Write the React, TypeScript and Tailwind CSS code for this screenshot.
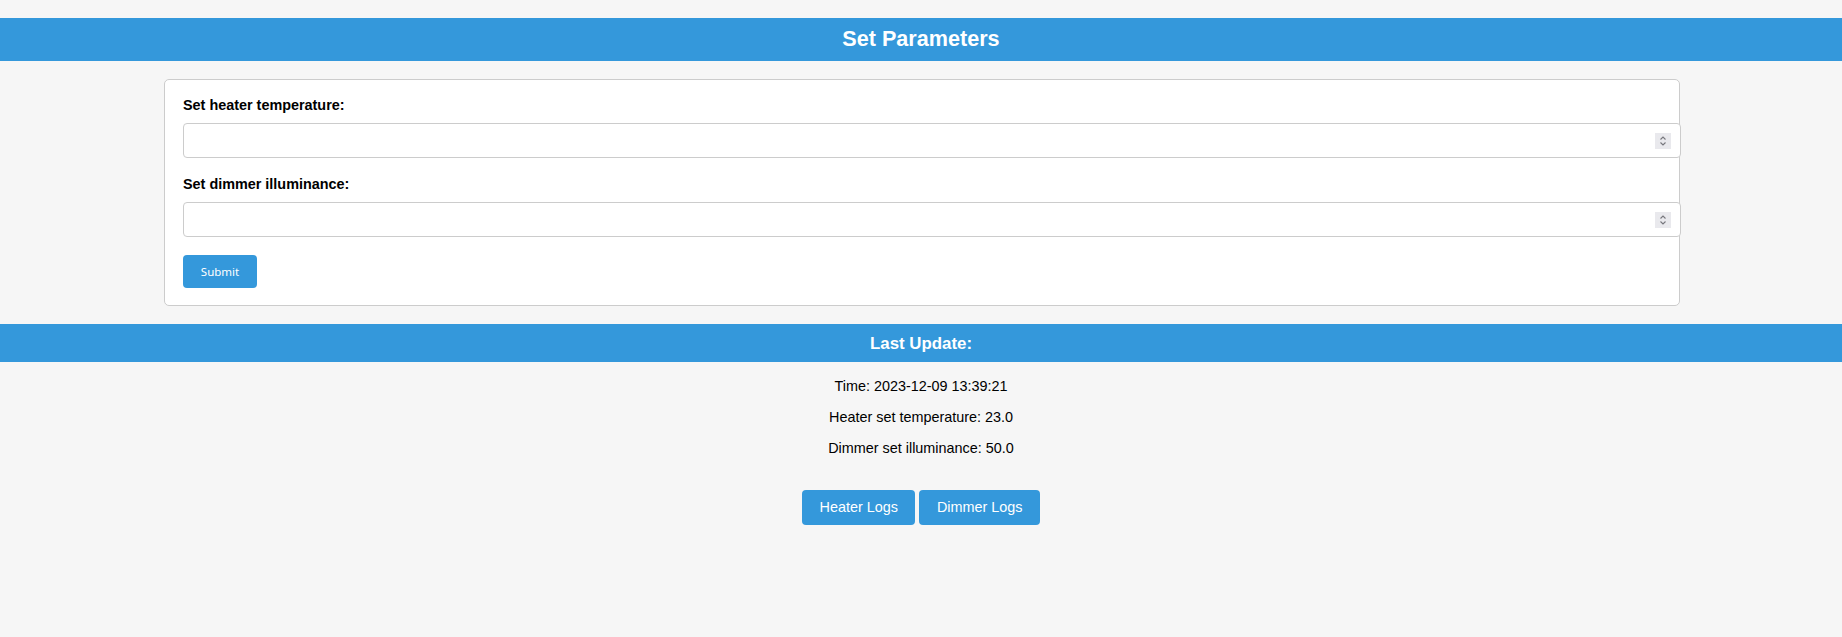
import { useState } from 'react';

const NumberField = ({ value, onChange }: { value: string; onChange: (v: string) => void }) => (
  <div className="relative h-[35px] w-[calc(100%+20px)]">
    <input
      type="text"
      inputMode="decimal"
      value={value}
      onChange={(e) => onChange(e.target.value)}
      className="block h-full w-full rounded-[4px] border border-[#cccccc] bg-white px-[10px] text-[14.4px] outline-none"
    />
    {/* fake spin button, chromium style */}
    <div className="pointer-events-none absolute right-[10px] top-[10px] h-[16px] w-[16px] bg-[#e9e9ed]">
      <svg viewBox="0 0 16 16" className="h-4 w-4" fill="none" stroke="#77777d" strokeWidth="1.1">
        <path d="M5.5 6.5 8 4l2.5 2.5" />
        <path d="M5.5 9.5 8 12l2.5-2.5" />
      </svg>
    </div>
  </div>
);

export default function App() {
  const [heater, setHeater] = useState('');
  const [dimmer, setDimmer] = useState('');

  const last = {
    time: '2023-12-09 13:39:21',
    heater: '23.0',
    dimmer: '50.0',
  };

  return (
    <div className="min-h-screen bg-[#f6f6f6] pt-[18px] font-['Liberation_Sans',Arial,sans-serif] text-black">
      <h2 className="flex h-[43px] items-center justify-center bg-[#3498db] text-[21.6px] font-bold text-white">
        Set Parameters
      </h2>

      <form
        onSubmit={(e) => e.preventDefault()}
        className="ml-[164px] mt-[18px] w-[1516px] rounded-[5px] border border-[#cccccc] bg-white px-[18px] pb-[17px] pt-[17px]"
      >
        <label className="mb-[9px] block text-[14.4px] font-bold leading-[17px]">Set heater temperature:</label>
        <NumberField value={heater} onChange={setHeater} />

        <label className="mb-[9px] mt-[18px] block text-[14.4px] font-bold leading-[17px]">
          Set dimmer illuminance:
        </label>
        <NumberField value={dimmer} onChange={setDimmer} />

        <button
          type="submit"
          className="mt-[18px] h-[33px] w-[74px] rounded-[4px] bg-[#3498db] font-['Noto_Sans',sans-serif] text-[11.5px] text-white"
        >
          Submit
        </button>
      </form>

      <h3 className="mt-[18px] flex h-[38px] items-center justify-center bg-[#3498db] pt-[1px] text-[16.85px] font-bold text-white">
        Last Update:
      </h3>

      <div className="pt-[16px] text-center text-[14.4px] leading-[17px]">
        <p>Time: {last.time}</p>
        <p className="mt-[14px]">Heater set temperature: {last.heater}</p>
        <p className="mt-[14px]">Dimmer set illuminance: {last.dimmer}</p>
      </div>

      <div className="mt-[33px] flex justify-center gap-[4px]">
        <button className="h-[35px] rounded-[4px] bg-[#3498db] px-[17.5px] text-[14.4px] text-white">Heater Logs</button>
        <button className="h-[35px] rounded-[4px] bg-[#3498db] px-[17.5px] text-[14.4px] text-white">Dimmer Logs</button>
      </div>
    </div>
  );
}
